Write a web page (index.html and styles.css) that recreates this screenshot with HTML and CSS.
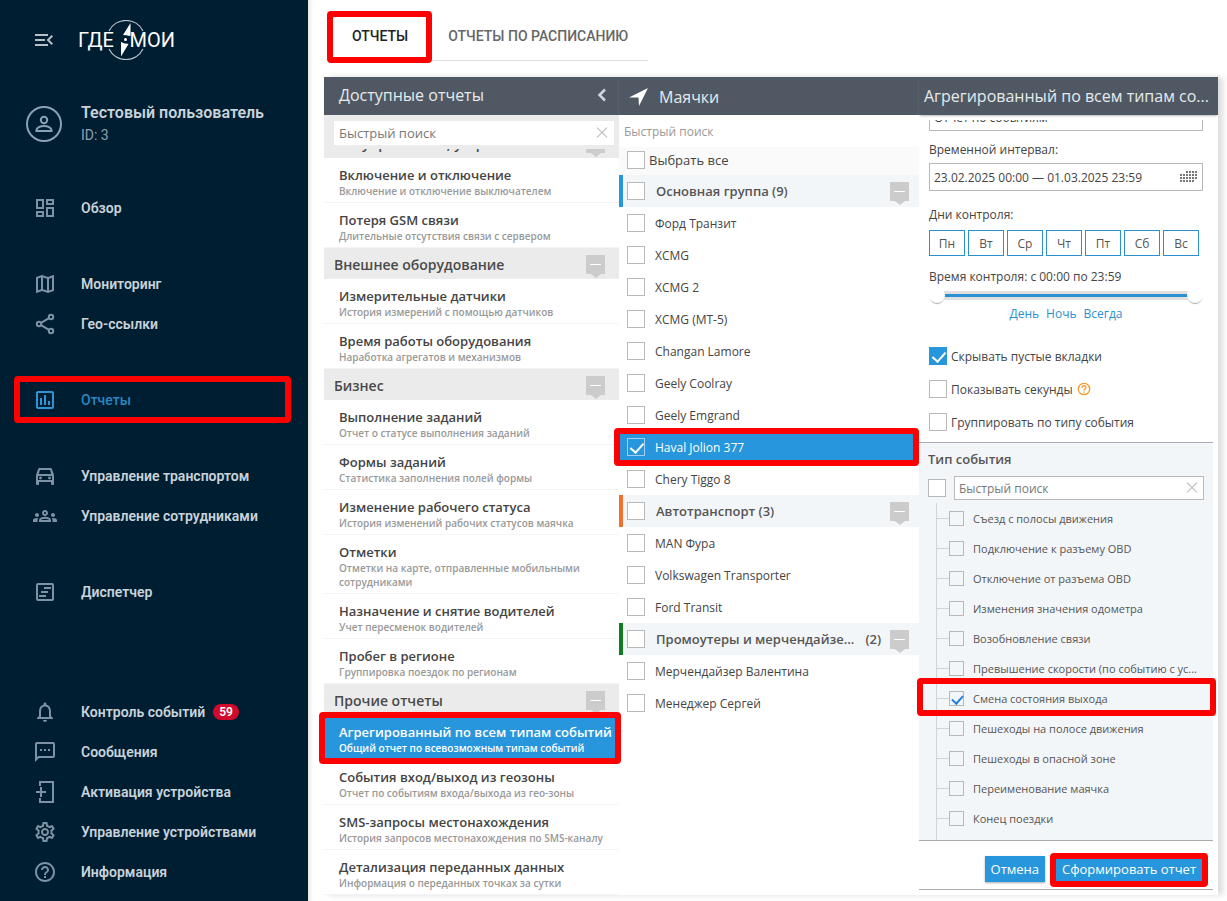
FILE: index.html
```html
<!DOCTYPE html>
<html lang="ru">
<head>
    <meta charset="UTF-8">
    <meta name="viewport" content="width=device-width, initial-scale=1.0">
    <title>Отчеты</title>
    <link rel="stylesheet" href="styles.css">
</head>
<body>

<!-- Sidebar -->
<aside class="sidebar">
    <div class="brand">
        <button type="button" class="menu-toggle" aria-label="Меню">
            <svg viewBox="0 0 24 24" width="24" height="24"><path d="M3 18h13v-2H3v2zm0-5h10v-2H3v2zm0-7v2h13V6H3zm18 9.59L17.42 12 21 8.41 19.59 7l-5 5 5 5L21 15.59z"/></svg>
        </button>
        <a href="#" class="logo">
            <svg class="logo-compass" viewBox="0 0 40 40" width="40" height="40">
                <path d="M3 11a19 19 0 0 1 34 0M3 29a19 19 0 0 0 34 0" fill="none" stroke="#b9c7d0" stroke-width="1.2"/>
                <path d="M24.500 3v13l-7.500-1zM15 36.500V22l7.500 2z"/>
                <circle cx="19.500" cy="19.500" r="4" fill="#001e32"/>
                <circle cx="19.500" cy="19.500" r="1.500"/>
            </svg>
            <span>ГДЕ</span>
            <span>МОИ</span>
        </a>
    </div>

    <div class="user">
        <svg viewBox="0 0 36 36" width="36" height="36" fill="none" stroke="#8ba2b3" stroke-width="2">
            <circle cx="18" cy="18" r="17"/>
            <circle cx="18" cy="14" r="3.200"/>
            <path d="M10.500 25v-1c0-2.500 4-4 7.500-4s7.500 1.500 7.500 4v1z"/>
        </svg>
        <div>
            <div class="user-name">Тестовый пользователь</div>
            <div class="user-id">ID: 3</div>
        </div>
    </div>

    <nav class="nav">
        <div class="nav-group">
            <a href="#"><svg viewBox="0 0 24 24"><path d="M19 5v2h-4V5h4M9 5v6H5V5h4m10 8v6h-4v-6h4M9 17v2H5v-2h4M21 3h-8v6h8V3zM11 3H3v10h8V3zm10 8h-8v10h8V11zm-10 4H3v6h8v-6z"/></svg>Обзор</a>
        </div>
        <div class="nav-group">
            <a href="#"><svg viewBox="0 0 24 24"><path d="M20.500 3l-.16.03L15 5.100 9 3 3.360 4.900c-.21.07-.36.25-.36.48V20.500c0 .28.22.5.5.5l.16-.03L9 18.900l6 2.100 5.640-1.900c.21-.07.36-.25.36-.48V3.500c0-.28-.22-.5-.5-.5zM10 5.470l4 1.400v11.660l-4-1.400V5.470zm-5 .99l3-1.010v11.700l-3 1.160V6.460zm14 11.080l-3 1.010V6.860l3-1.160v11.840z"/></svg>Мониторинг</a>
            <a href="#"><svg viewBox="0 0 24 24" class="stroked"><circle cx="18" cy="5" r="2.200"/><circle cx="6" cy="12" r="2.200"/><circle cx="18" cy="19" r="2.200"/><path d="M8 10.800l8-4.700M8 13.200l8 4.700"/></svg>Гео-ссылки</a>
        </div>
        <div class="nav-group">
            <a href="#" class="active marked"><svg viewBox="0 0 24 24"><path d="M9 17H7v-7h2v7zm4 0h-2V7h2v10zm4 0h-2v-4h2v4zm2 2H5V5h14v14zm0-16H5c-1.100 0-2 .9-2 2v14c0 1.100.9 2 2 2h14c1.100 0 2-.9 2-2V5c0-1.100-.9-2-2-2z"/></svg>Отчеты</a>
        </div>
        <div class="nav-group">
            <a href="#"><svg viewBox="0 0 24 24"><path d="M18.920 5.010C18.720 4.420 18.160 4 17.500 4h-11c-.66 0-1.210.42-1.420 1.010L3 11v9c0 .55.45 1 1 1h1c.55 0 1-.45 1-1v-2h12v2c0 .55.45 1 1 1h1c.55 0 1-.45 1-1v-9l-2.080-5.990zM6.850 6h10.290l1.080 4H5.810l1.040-4zM19 16H5v-4h14v4z"/><circle cx="7.500" cy="14" r="1.400"/><circle cx="16.500" cy="14" r="1.400"/></svg>Управление транспортом</a>
            <a href="#"><svg viewBox="0 0 24 24"><path d="M4 13c1.100 0 2-.9 2-2s-.9-2-2-2-2 .9-2 2 .9 2 2 2zm1.130 1.100C4.760 14.040 4.390 14 4 14c-.99 0-1.930.21-2.780.58C.48 14.900 0 15.620 0 16.430V18h4.500v-1.610c0-.83.23-1.610.63-2.290zM20 13c1.100 0 2-.9 2-2s-.9-2-2-2-2 .9-2 2 .9 2 2 2zm4 3.430c0-.81-.48-1.530-1.220-1.850-.85-.37-1.790-.58-2.780-.58-.39 0-.76.04-1.130.1.400.68.63 1.460.63 2.290V18H24v-1.570zM16.240 13.650c-1.170-.52-2.610-.9-4.240-.9s-3.070.39-4.240.9C6.680 14.130 6 15.210 6 16.390V18h12v-1.610c0-1.180-.68-2.260-1.760-2.740zM8.070 16c.09-.23.13-.39.91-.69.97-.38 1.990-.56 3.020-.56s2.050.18 3.020.56c.77.3.81.46.91.69H8.070zM12 8c.55 0 1 .45 1 1s-.45 1-1 1-1-.45-1-1 .45-1 1-1m0-2c-1.660 0-3 1.340-3 3s1.340 3 3 3 3-1.340 3-3-1.340-3-3-3z"/></svg>Управление сотрудниками</a>
        </div>
        <div class="nav-group">
            <a href="#"><svg viewBox="0 0 24 24" class="stroked"><rect x="4" y="4" width="16" height="16" rx="1"/><path d="M11 8h7M8 12h7M6 16h7"/></svg>Диспетчер</a>
        </div>
        <div class="nav-group nav-bottom">
            <a href="#"><svg viewBox="0 0 24 24"><path d="M12 22c1.100 0 2-.9 2-2h-4c0 1.100.9 2 2 2zm6-6v-5c0-3.070-1.630-5.640-4.500-6.320V4c0-.83-.67-1.500-1.500-1.500s-1.500.67-1.500 1.500v.68C7.640 5.360 6 7.920 6 11v5l-2 2v1h16v-1l-2-2zm-2 1H8v-6c0-2.480 1.510-4.500 4-4.500s4 2.020 4 4.500v6z"/></svg>Контроль событий<span class="badge">59</span></a>
            <a href="#"><svg viewBox="0 0 24 24"><path d="M20 2H4c-1.100 0-2 .9-2 2v18l4-4h14c1.100 0 2-.9 2-2V4c0-1.100-.9-2-2-2zm0 14H5.170L4 17.170V4h16v12zM7 9h2v2H7zm4 0h2v2h-2zm4 0h2v2h-2z"/></svg>Сообщения</a>
            <a href="#"><svg viewBox="0 0 24 24" class="stroked"><path d="M7 6V2h13v20H7v-4M3 12h10M8 7v10"/></svg>Активация устройства</a>
            <a href="#"><svg viewBox="0 0 24 24"><path d="M19.430 12.980c.04-.32.07-.64.07-.98 0-.34-.03-.66-.07-.98l2.110-1.650c.19-.15.24-.42.12-.64l-2-3.460c-.09-.16-.26-.25-.44-.25-.06 0-.12.01-.17.03l-2.490 1c-.52-.4-1.080-.73-1.690-.98l-.38-2.650C14.460 2.180 14.250 2 14 2h-4c-.25 0-.46.18-.49.42l-.38 2.650c-.61.25-1.170.59-1.690.98l-2.490-1c-.06-.02-.12-.03-.18-.03-.17 0-.34.09-.43.25l-2 3.460c-.13.22-.07.49.12.64l2.110 1.650c-.04.32-.07.65-.07.98 0 .33.03.66.07.98l-2.110 1.650c-.19.15-.24.42-.12.64l2 3.460c.09.16.26.25.44.25.06 0 .12-.01.17-.03l2.490-1c.52.4 1.080.73 1.690.98l.38 2.650c.03.24.24.42.49.42h4c.25 0 .46-.18.49-.42l.38-2.650c.61-.25 1.170-.59 1.690-.98l2.490 1c.06.02.12.03.18.03.17 0 .34-.09.43-.25l2-3.460c.12-.22.07-.49-.12-.64l-2.110-1.650zm-1.980-1.710c.04.31.05.52.05.73 0 .21-.02.43-.05.73l-.14 1.130.89.700 1.080.84-.7 1.210-1.270-.51-1.040-.42-.9.680c-.43.32-.84.56-1.250.73l-1.060.43-.16 1.130-.2 1.350h-1.400l-.19-1.350-.16-1.130-1.060-.43c-.43-.18-.83-.41-1.230-.71l-.91-.7-1.060.43-1.270.51-.7-1.210 1.080-.84.89-.7-.14-1.130c-.03-.31-.05-.54-.05-.74s.02-.43.05-.73l.14-1.130-.89-.7-1.080-.84.7-1.210 1.270.51 1.040.42.9-.68c.43-.32.84-.56 1.250-.73l1.060-.43.16-1.130.2-1.350h1.390l.19 1.350.16 1.130 1.060.43c.43.18.83.41 1.230.71l.91.7 1.060-.43 1.270-.51.7 1.210-1.070.85-.89.700.14 1.130zM12 8c-2.210 0-4 1.790-4 4s1.790 4 4 4 4-1.790 4-4-1.790-4-4-4zm0 6c-1.100 0-2-.9-2-2s.9-2 2-2 2 .9 2 2-.9 2-2 2z"/></svg>Управление устройствами</a>
            <a href="#"><svg viewBox="0 0 24 24"><path d="M11 18h2v-2h-2v2zm1-16C6.480 2 2 6.480 2 12s4.480 10 10 10 10-4.480 10-10S17.520 2 12 2zm0 18c-4.410 0-8-3.590-8-8s3.590-8 8-8 8 3.590 8 8-3.590 8-8 8zm0-14c-2.210 0-4 1.790-4 4h2c0-1.100.9-2 2-2s2 .9 2 2c0 2-3 1.750-3 5h2c0-2.250 3-2.500 3-5 0-2.210-1.790-4-4-4z"/></svg>Информация</a>
        </div>
    </nav>
</aside>

<main class="main">
    <div class="tabs">
        <button type="button" class="tab current marked">ОТЧЕТЫ</button>
        <button type="button" class="tab">ОТЧЕТЫ ПО РАСПИСАНИЮ</button>
    </div>

    <div class="panel">

        <!-- Available reports -->
        <section class="column reports">
            <header class="column-header">
                <h2>Доступные отчеты</h2>
                <button type="button" class="icon-button" aria-label="Назад">
                    <svg viewBox="0 0 12 16" width="12" height="16"><path d="M9 2.500L3.500 8 9 13.500" fill="none" stroke="#d0d6da" stroke-width="2.500"/></svg>
                </button>
            </header>
            <div class="report-search">
                <div class="search-box">
                    <input type="text" placeholder="Быстрый поиск" aria-label="Поиск отчета">
                    <button type="button" class="clear" aria-label="Очистить"></button>
                </div>
            </div>
            <div class="scrolled-group">
                <h3 class="report-group">Все управление, устройства<button type="button" class="fold" aria-label="Свернуть"></button></h3>
            </div>
            <a href="#" class="report"><b>Включение и отключение</b><small>Включение и отключение выключателем</small></a>
            <a href="#" class="report"><b>Потеря GSM связи</b><small>Длительные отсутствия связи с сервером</small></a>
            <h3 class="report-group">Внешнее оборудование<button type="button" class="fold" aria-label="Свернуть"></button></h3>
            <a href="#" class="report"><b>Измерительные датчики</b><small>История измерений с помощью датчиков</small></a>
            <a href="#" class="report"><b>Время работы оборудования</b><small>Наработка агрегатов и механизмов</small></a>
            <h3 class="report-group">Бизнес<button type="button" class="fold" aria-label="Свернуть"></button></h3>
            <a href="#" class="report"><b>Выполнение заданий</b><small>Отчет о статусе выполнения заданий</small></a>
            <a href="#" class="report"><b>Формы заданий</b><small>Статистика заполнения полей формы</small></a>
            <a href="#" class="report"><b>Изменение рабочего статуса</b><small>История изменений рабочих статусов маячка</small></a>
            <a href="#" class="report"><b>Отметки</b><small>Отметки на карте, отправленные мобильными сотрудниками</small></a>
            <a href="#" class="report"><b>Назначение и снятие водителей</b><small>Учет пересменок водителей</small></a>
            <a href="#" class="report"><b>Пробег в регионе</b><small>Группировка поездок по регионам</small></a>
            <h3 class="report-group">Прочие отчеты<button type="button" class="fold" aria-label="Свернуть"></button></h3>
            <a href="#" class="report selected marked"><b>Агрегированный по всем типам событий</b><small>Общий отчет по всевозможным типам событий</small></a>
            <a href="#" class="report"><b>События вход/выход из геозоны</b><small>Отчет по событиям входа/выхода из гео-зоны</small></a>
            <a href="#" class="report"><b>SMS-запросы местонахождения</b><small>История запросов местонахождения по SMS-каналу</small></a>
            <a href="#" class="report"><b>Детализация переданных данных</b><small>Информация о переданных точках за сутки</small></a>
        </section>

        <!-- Trackers -->
        <section class="column trackers">
            <header class="column-header">
                <svg viewBox="0 0 20 20" width="20" height="20"><path d="M19 1L0 10.500h9.500L10 19z" fill="#fff"/></svg>
                <h2>Маячки</h2>
            </header>
            <input type="text" class="tracker-search" placeholder="Быстрый поиск" aria-label="Поиск маячка">
            <label class="select-all"><input type="checkbox">Выбрать все</label>

            <div class="tracker-group blue"><label><input type="checkbox"><span>Основная группа (9)</span></label><button type="button" class="fold" aria-label="Свернуть"></button></div>
            <label class="tracker"><input type="checkbox">Форд Транзит</label>
            <label class="tracker"><input type="checkbox">XCMG</label>
            <label class="tracker"><input type="checkbox">XCMG 2</label>
            <label class="tracker"><input type="checkbox">XCMG (МТ-5)</label>
            <label class="tracker"><input type="checkbox">Changan Lamore</label>
            <label class="tracker"><input type="checkbox">Geely Coolray</label>
            <label class="tracker"><input type="checkbox">Geely Emgrand</label>
            <label class="tracker selected marked"><input type="checkbox" checked>Haval Jolion 377</label>
            <label class="tracker"><input type="checkbox">Chery Tiggo 8</label>

            <div class="tracker-group orange"><label><input type="checkbox"><span>Автотранспорт (3)</span></label><button type="button" class="fold" aria-label="Свернуть"></button></div>
            <label class="tracker"><input type="checkbox">MAN Фура</label>
            <label class="tracker"><input type="checkbox">Volkswagen Transporter</label>
            <label class="tracker"><input type="checkbox">Ford Transit</label>

            <div class="tracker-group green"><label><input type="checkbox"><span>Промоутеры и мерчендайзе...</span><span>(2)</span></label><button type="button" class="fold" aria-label="Свернуть"></button></div>
            <label class="tracker"><input type="checkbox">Мерчендайзер Валентина</label>
            <label class="tracker"><input type="checkbox">Менеджер Сергей</label>
        </section>

        <!-- Report settings -->
        <section class="column settings">
            <header class="column-header">
                <h2>Агрегированный по всем типам со...</h2>
            </header>
            <form class="settings-form">
                <div class="fields">
                    <div class="scrolled-field">
                        <input type="text" class="field" value="Отчет по событиям" aria-label="Название отчета">
                    </div>

                    <label class="field-label" for="interval">Временной интервал:</label>
                    <div class="date-field">
                        <input type="text" class="field" id="interval" value="23.02.2025 00:00 — 01.03.2025 23:59">
                        <svg viewBox="0 0 18 12" width="18" height="12" fill="none" stroke="#777" stroke-width="2" stroke-dasharray="2 1">
                            <path d="M6 1h12M0 4h18M0 7h18M0 10h15"/>
                        </svg>
                    </div>

                    <div class="field-label days-label">Дни контроля:</div>
                    <div class="days">
                        <button type="button">Пн</button>
                        <button type="button">Вт</button>
                        <button type="button">Ср</button>
                        <button type="button">Чт</button>
                        <button type="button">Пт</button>
                        <button type="button">Сб</button>
                        <button type="button">Вс</button>
                    </div>

                    <div class="field-label time-label">Время контроля: с 00:00 по 23:59</div>
                    <div class="time-range">
                        <input type="range" min="0" max="1439" value="0" aria-label="Начало">
                        <input type="range" min="0" max="1439" value="1439" aria-label="Конец">
                    </div>
                    <div class="presets">
                        <a href="#">День</a>
                        <a href="#">Ночь</a>
                        <a href="#">Всегда</a>
                    </div>

                    <div class="options">
                        <label><input type="checkbox" checked>Скрывать пустые вкладки</label>
                        <label><input type="checkbox">Показывать секунды
                            <svg viewBox="0 0 14 14" width="14" height="14" fill="none" stroke="#f39a2d" stroke-width="1.300"><circle cx="7" cy="7" r="5.700"/><path d="M5 5.800c0-2.800 4-2.600 4-.3 0 1.400-2 1.400-2 3M7 9.500v1.300"/></svg>
                        </label>
                        <label><input type="checkbox">Группировать по типу события</label>
                    </div>
                </div>

                <div class="events">
                    <h3>Тип события</h3>
                    <div class="event-filter">
                        <input type="checkbox" aria-label="Все события">
                        <div class="search-box">
                            <input type="text" placeholder="Быстрый поиск" aria-label="Поиск события">
                            <button type="button" class="clear" aria-label="Очистить"></button>
                        </div>
                    </div>
                    <div class="event-tree">
                        <label><input type="checkbox"><span>Съезд с полосы движения</span></label>
                        <label><input type="checkbox"><span>Подключение к разъему OBD</span></label>
                        <label><input type="checkbox"><span>Отключение от разъема OBD</span></label>
                        <label><input type="checkbox"><span>Изменения значения одометра</span></label>
                        <label><input type="checkbox"><span>Возобновление связи</span></label>
                        <label><input type="checkbox"><span>Превышение скорости (по событию с ус...</span></label>
                        <label class="marked"><input type="checkbox" checked><span>Смена состояния выхода</span></label>
                        <label><input type="checkbox"><span>Пешеходы на полосе движения</span></label>
                        <label><input type="checkbox"><span>Пешеходы в опасной зоне</span></label>
                        <label><input type="checkbox"><span>Переименование маячка</span></label>
                        <label><input type="checkbox"><span>Конец поездки</span></label>
                    </div>
                </div>

                <div class="actions">
                    <button type="button">Отмена</button>
                    <button type="button" class="marked">Сформировать отчет</button>
                </div>
            </form>
        </section>
    </div>
</main>
</body>
</html>
```
FILE: styles.css
```css
* {
    box-sizing: border-box;
}

body {
    margin: 0;
    display: flex;
    min-height: 100vh;
    background-color: #fff;
    color: #444;
    font-family: 'Open Sans', 'Noto Sans', sans-serif;
    font-size: 12px;
}

h2,
h3 {
    margin: 0;
}

a {
    text-decoration: none;
}

button,
input {
    font-family: inherit;
}

button {
    cursor: pointer;
}

/* Red frame over the step the user has to click */
.marked {
    position: relative;
}

.marked::after {
    content: '';
    position: absolute;
    inset: -4px;
    border: 6px solid #f00;
    border-radius: 4px;
    z-index: 2;
    pointer-events: none;
}

/* Sidebar */
.sidebar {
    flex: none;
    width: 308px;
    padding: 20px 0 9px;
    display: flex;
    flex-direction: column;
    background-color: #001e32;
    color: #c9d3da;
    font-family: Roboto, sans-serif;
}

.brand {
    display: flex;
    align-items: center;
    height: 40px;
    padding-left: 32px;
    gap: 22px;
}

.menu-toggle {
    padding: 0;
    border: none;
    background: none;
    height: 24px;
    fill: #b4bfc7;
}

.logo {
    position: relative;
    display: flex;
    justify-content: space-between;
    align-items: center;
    width: 97px;
    height: 40px;
    color: #fff;
    font-size: 20px;
}

.logo-compass {
    position: absolute;
    left: 28px;
    top: 0;
    fill: #fff;
}

.user {
    display: flex;
    gap: 19px;
    margin-top: 42px;
    padding-left: 26px;
    align-items: center;
}

.user-name {
    font-size: 16px;
    font-weight: 600;
    line-height: 22px;
}

.user-id {
    color: #8ba2b3;
    font-size: 14px;
    line-height: 22px;
}

.nav {
    flex: 1;
    display: flex;
    flex-direction: column;
    gap: 36px;
    margin-top: 42px;
}

.nav-group a {
    display: flex;
    align-items: center;
    height: 40px;
    padding-left: 33px;
    color: #c9d3da;
    font-size: 14px;
    font-weight: 600;
}

.nav-group svg {
    width: 24px;
    height: 24px;
    margin-right: 24px;
    fill: #7d93a3;
}

.nav-group svg.stroked {
    fill: none;
    stroke: #7d93a3;
    stroke-width: 2;
}

.nav-group a.active {
    color: #2b87c0;
    font-weight: 500;
}

.nav-group a.active svg {
    fill: #2b95d8;
}

.nav-group .marked::after {
    inset: -4px 17px -3px 14px;
}

.nav-bottom {
    margin-top: auto;
}

.badge {
    margin-left: 8px;
    padding: 0 6px;
    border-radius: 8px;
    background-color: #cf0a2c;
    color: #fff;
    font-size: 12px;
    line-height: 16px;
}

/* Main area */
.main {
    flex: 1;
    min-width: 0;
    padding: 11px 9px 5px 16px;
    box-shadow: inset 5px 0 4px -3px #e4e4e4;
}

.tabs {
    display: flex;
    width: max-content;
    height: 50px;
    margin-left: 4px;
    border-bottom: 1px solid #e0e0e0;
    font-family: Roboto, sans-serif;
}

.tab {
    padding: 0 20px 0 16px;
    border: none;
    background: none;
    color: #666;
    font-size: 14px;
    font-weight: 500;
}

.tab.current {
    padding: 0 24px;
    color: #222;
}

.tab.marked::after {
    inset: 0 0 -3px -1px;
}

.panel {
    display: grid;
    grid-template-columns: 295fr 300fr 299fr;
    margin-top: 16px;
    background-color: #fff;
    box-shadow: 5px 0 6px #ddd;
}

.column {
    min-width: 0;
}

.column-header {
    display: flex;
    align-items: center;
    height: 38px;
    padding: 0 11px 2px 15px;
    background-color: #505963;
    color: #e6eaed;
    box-shadow: 0 2px 2px -1px #bbb;
}

.column-header h2 {
    flex: 1;
    font-size: 16px;
    font-weight: 400;
    white-space: nowrap;
}

.icon-button {
    padding: 0;
    border: none;
    background: none;
    height: 16px;
}

.search-box {
    display: flex;
    align-items: center;
    height: 24px;
    padding: 0 5px;
    background-color: #fff;
}

.search-box input {
    flex: 1;
    min-width: 0;
    padding: 0;
    border: none;
    background: none;
    outline: none;
    font-size: 13px;
}

input::placeholder {
    color: #777;
}

.clear {
    position: relative;
    width: 14px;
    height: 14px;
    padding: 0;
    border: none;
    background: none;
}

.clear::before,
.clear::after {
    content: '';
    position: absolute;
    left: 0;
    top: 6px;
    width: 14px;
    height: 1px;
    background-color: #bbb;
    transform: rotate(45deg);
}

.clear::after {
    transform: rotate(-45deg);
}

/* Collapse button with a small tail */
.fold {
    position: relative;
    flex: none;
    width: 19px;
    height: 19px;
    padding: 0;
    border: none;
    background-color: #ccc;
}

.fold::before {
    content: '';
    position: absolute;
    left: 4px;
    top: 9px;
    width: 11px;
    height: 1px;
    background-color: #fff;
}

.fold::after {
    content: '';
    position: absolute;
    left: 5px;
    top: 19px;
    border: 5px solid transparent;
    border-top: 4px solid #ccc;
    border-bottom: none;
}

/* Reports */
.report-search {
    padding: 6px 5px 4px 10px;
    background-color: #ebebeb;
}

.scrolled-group {
    display: flex;
    align-items: flex-end;
    height: 9px;
    overflow: hidden;
}

.scrolled-group .report-group {
    flex: 1;
}

.report-group {
    display: flex;
    justify-content: space-between;
    align-items: center;
    height: 31px;
    padding: 2px 14px 0 10px;
    background-color: #ebebeb;
    color: #4a4a4a;
    font-size: 14px;
    font-weight: 600;
}

.report {
    display: block;
    padding: 8px 8px 4px 15px;
    border-bottom: 1px solid #f4f4f4;
    color: #444;
}

.report b {
    display: block;
    font-size: 13px;
    font-weight: 600;
    line-height: 18px;
    white-space: nowrap;
}

.report small {
    display: block;
    color: #999;
    font-size: 10px;
    font-weight: 600;
    line-height: 14px;
}

.report.selected {
    background-color: #2896dc;
    color: #fff;
}

.report.selected small {
    color: #fff;
}

.report.marked::after {
    inset: -3px -2px -5px -5px;
}

/* Tick boxes */
input[type="checkbox"] {
    appearance: none;
    position: relative;
    flex: none;
    width: 18px;
    height: 18px;
    margin: 0;
    border: 1px solid #b9b9b9;
    background-color: #fff;
}

input[type="checkbox"]:checked {
    border-color: #2896dc;
    background-color: #2896dc;
}

input[type="checkbox"]:checked::after {
    content: '';
    position: absolute;
    left: 5px;
    top: 1px;
    width: 6px;
    height: 11px;
    border: solid #fff;
    border-width: 0 2px 2px 0;
    transform: rotate(42deg);
}

/* Trackers */
.trackers .column-header {
    padding: 2px 10px 0;
    gap: 10px;
}

.tracker-search {
    display: block;
    width: 100%;
    height: 32px;
    padding: 0 5px;
    border: none;
    outline: none;
    font-size: 12px;
}

.tracker-search::placeholder {
    color: #999;
}

.select-all {
    display: flex;
    align-items: center;
    gap: 4px;
    height: 28px;
    padding: 0 8px 2px;
    background-color: #fafafa;
    font-size: 13px;
}

.tracker {
    display: flex;
    align-items: center;
    gap: 10px;
    height: 32px;
    padding-left: 8px;
}

.tracker.selected {
    background-color: #2896dc;
    color: #fff;
    font-weight: 500;
}

.tracker.selected input {
    border-color: #9fd0f1;
}

.tracker.marked::after {
    inset: -3px 0 -3px -5px;
}

.tracker-group {
    display: flex;
    align-items: center;
    height: 32px;
    padding-right: 10px;
    border-left: 4px solid;
    background-color: #f3f6f9;
    font-size: 13px;
    font-weight: 600;
}

.tracker-group label {
    flex: 1;
    display: flex;
    align-items: center;
    gap: 11px;
    padding-left: 4px;
    color: #555;
}

.blue {
    border-color: #2896dc;
}

.orange {
    border-color: #f07030;
}

.green {
    border-color: #107c20;
}

/* Report settings */
.settings .column-header {
    padding: 0 9px 0 5px;
}

.settings-form {
    padding: 5px 5px 5px 0;
}

.fields {
    padding: 0 10px 11px;
}

.scrolled-field {
    display: flex;
    align-items: flex-end;
    height: 11px;
    overflow: hidden;
}

.field {
    width: 100%;
    height: 28px;
    padding: 0 4px;
    border: 1px solid #b9b9b9;
    background-color: #fff;
    color: #444;
    font-size: 12px;
}

.field-label {
    display: block;
    margin-top: 10px;
    line-height: 18px;
}

.date-field {
    display: flex;
    align-items: center;
    margin-top: 4px;
}

.date-field svg {
    margin: 0 5px 0 -23px;
}

.days-label {
    margin-top: 15px;
}

.days {
    display: flex;
    gap: 3px;
    margin-top: 6px;
}

.days button {
    width: 36px;
    height: 26px;
    padding: 0;
    border: 1px solid #2b90d0;
    background-color: #fff;
    color: #555;
    font-size: 12px;
}

.time-label {
    margin-top: 12px;
}

.time-range {
    display: grid;
    align-items: center;
    height: 18px;
    background: linear-gradient(#e0e0e0 3px, #2b90d0 3px, #2b90d0 6px, #e0e0e0 6px) 8px 5px / calc(100% - 16px) 9px no-repeat;
}

.time-range input {
    grid-area: 1 / 1;
    appearance: none;
    width: 100%;
    margin: 0;
    background: none;
}

.time-range input::-webkit-slider-thumb {
    appearance: none;
    width: 16px;
    height: 16px;
    border-radius: 50%;
    background-color: #fff;
    box-shadow: 0 2px 1px -1px #aaa;
}

.presets {
    display: flex;
    justify-content: center;
    gap: 7px;
    line-height: 20px;
}

.presets a {
    color: #2b90d0;
}

.options {
    display: flex;
    flex-direction: column;
    gap: 15px;
    margin-top: 23px;
}

.options label {
    display: flex;
    align-items: center;
    gap: 4px;
}

.events {
    padding: 7px 9px 0;
    border-top: 1px solid #aab;
    border-bottom: 1px solid #aaa;
    background-color: #f3f6f9;
}

.events h3 {
    color: #555;
    font-size: 13px;
    font-weight: 600;
    line-height: 18px;
}

.event-filter {
    display: flex;
    align-items: center;
    gap: 8px;
    margin-top: 8px;
}

.event-filter .search-box {
    flex: 1;
    padding: 0 4px;
    border: 1px solid #b9b9b9;
}

.event-filter .search-box input {
    font-size: 12px;
}

.event-tree {
    margin: 3px -9px 0 8px;
    padding-bottom: 7px;
    border-left: 1px solid #d0d4d8;
    font-size: 11px;
}

.event-tree label {
    display: flex;
    align-items: center;
    height: 30px;
    color: #555;
}

.event-tree label::before {
    content: '';
    width: 12px;
    height: 1px;
    background-color: #d0d4d8;
}

.event-tree input[type="checkbox"] {
    width: 15px;
    height: 15px;
    margin-right: 9px;
    background: none;
}

.event-tree input[type="checkbox"]:checked {
    border-color: #b9b9b9;
}

.event-tree input[type="checkbox"]:checked::after {
    left: 4px;
    width: 5px;
    height: 9px;
    border-color: #2080e0;
}

.event-tree .marked::after {
    inset: -5px -3px -3px -20px;
}

.actions {
    display: flex;
    justify-content: flex-end;
    gap: 11px;
    padding: 15px 11px 7px;
    border-bottom: 1px solid #aaa;
}

.actions button {
    height: 26px;
    padding: 0 6px;
    border: none;
    background-color: #2896dc;
    color: #fff;
    font-size: 13px;
    font-weight: 500;
    box-shadow: 0 1px 2px #aaa;
}

.actions .marked::after {
    inset: -3px -6px -5px;
}
```
